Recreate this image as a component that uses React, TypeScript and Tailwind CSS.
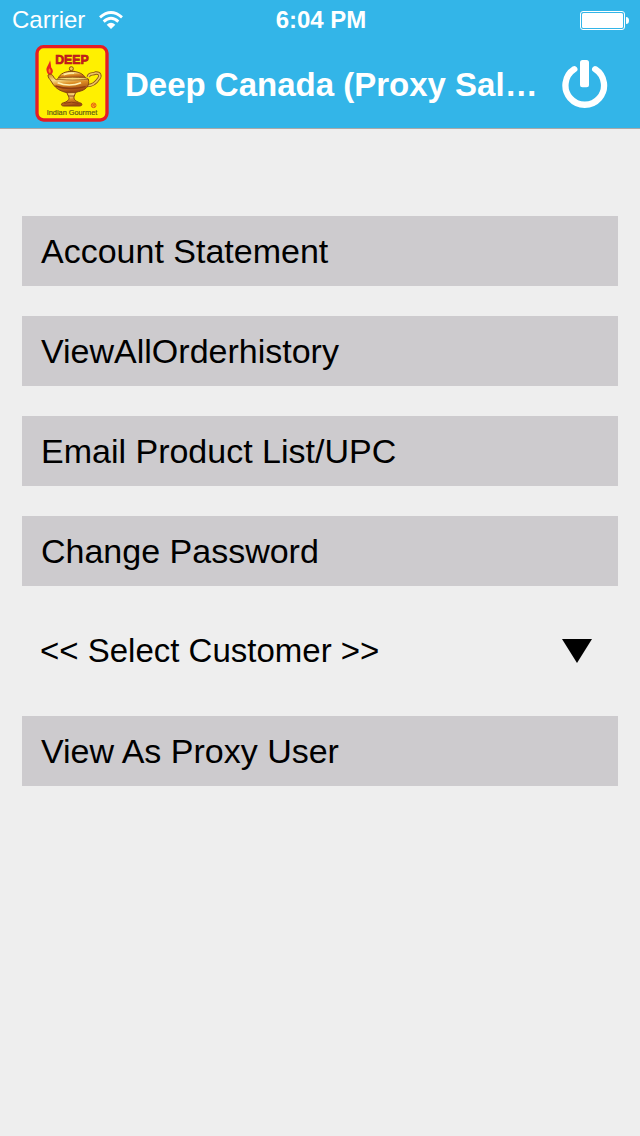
import { useState } from "react";

function WifiIcon() {
  return (
    <svg viewBox="0 0 72 54" className="h-[18px] w-6" aria-hidden="true">
      <g fill="none" stroke="#fff" strokeWidth="8.500">
        <path d="M3 19 Q36 -10 69 19" />
        <path d="M14 32 Q36 12 58 32" />
      </g>
      <path d="M23 41 Q36 30 49 41 L36 54 Z" fill="#fff" />
    </svg>
  );
}

function BatteryIcon() {
  return (
    <svg viewBox="0 0 50 20" className="h-5 w-[50px]" aria-hidden="true">
      <rect x="0.500" y="1.500" width="44" height="18" rx="2.500" fill="none" stroke="#fff" />
      <rect x="2" y="3" width="41" height="15" rx="1.500" fill="#fff" />
      <path d="M46 7 Q49 7 49 10.500 Q49 14 46 14 Z" fill="#fff" />
    </svg>
  );
}

function PowerIcon() {
  return (
    <svg viewBox="0 0 46 48" className="h-12 w-[46px]" aria-hidden="true">
      <path
        d="M12.300 9.200 A19.300 19.300 0 1 0 33.200 9.200"
        fill="none"
        stroke="#fff"
        strokeWidth="6.300"
        strokeLinecap="round"
      />
      <rect x="18" y="0" width="9" height="27.300" rx="2.500" fill="#fff" />
    </svg>
  );
}

function Logo() {
  return (
    <svg
      viewBox="21 20 222 231"
      className="h-[77px] w-[74px] shrink-0"
      role="img"
      aria-label="Deep Indian Gourmet"
    >
      <defs>
        <linearGradient id="gold" x1="0" x2="0.300" y1="0" y2="1">
          <stop offset="0" stopColor="#d98c1c" />
          <stop offset="0.350" stopColor="#f8dc86" />
          <stop offset="0.600" stopColor="#dc8c22" />
          <stop offset="1" stopColor="#a04a14" />
        </linearGradient>
      </defs>
      <rect x="27" y="25" width="210" height="220" rx="20" fill="#fff000" stroke="#e51c25" strokeWidth="10" />
      <text
        x="132"
        y="78"
        textAnchor="middle"
        fontFamily="'Liberation Sans', Arial, sans-serif"
        fontWeight="700"
        fontSize="37"
        fill="#d0181e"
        stroke="#b0181a"
        strokeWidth="2"
      >
        DEEP
      </text>
      <path d="M66 66 C63 80 53 87 56 98 C57 106 62 110 68 109 C77 104 76 94 70 88 C68 82 69 74 66 66 Z" fill="#e8251f" />
      <path d="M64 90 C60 96 61 102 66 105 C70 100 68 94 64 90 Z" fill="#ff8a1c" />
      <path
        d="M181 116 C182 103 194 109 203 104 C216 103 219 112 212 121 C204 134 190 142 177 142"
        fill="none"
        stroke="#8a5510"
        strokeWidth="10"
      />
      <path
        d="M181 116 C182 103 194 109 203 104 C216 103 219 112 212 121 C204 134 190 142 177 142"
        fill="none"
        stroke="#efc562"
        strokeWidth="5"
      />
      <path
        d="M60 110 C67 105 74 109 77 116 C81 124 87 126 93 122 L181 122 C187 144 171 156 151 160 C139 165 116 165 103 159 C86 153 76 141 69 128 C65 121 60 119 60 110 Z"
        fill="url(#gold)"
        stroke="#85480e"
        strokeWidth="3"
      />
      <path d="M91 120 C95 106 113 99 130 99 C149 99 167 106 173 120 Z" fill="url(#gold)" stroke="#85480e" strokeWidth="3" />
      <path d="M107 110 Q122 103 138 105" fill="none" stroke="#fff0a4" strokeWidth="4" />
      <ellipse cx="134" cy="121" rx="46" ry="4" fill="#f9d979" stroke="#85500e" strokeWidth="2" />
      <circle cx="130" cy="91" r="6" fill="#f6c256" stroke="#85500e" strokeWidth="3" />
      <path d="M120 99 h20" stroke="#85500e" strokeWidth="3" />
      <path d="M82 143 Q123 157 173 145" fill="none" stroke="#8e3d12" strokeWidth="4" />
      <path d="M89 133 C110 142 138 142 159 133" fill="none" stroke="#fff1b4" strokeWidth="5" />
      <path
        d="M116 162 H143 L138 175 C136 185 146 190 160 195 Q165 202 155 203 H107 Q97 202 102 195 C119 190 126 184 122 175 Z"
        fill="url(#gold)"
        stroke="#85400e"
        strokeWidth="3"
      />
      <path d="M120 173 h19 M109 195 q21 -7 43 0" fill="none" stroke="#8e3d12" strokeWidth="3" />
      <circle cx="197" cy="201" r="7" fill="none" stroke="#e6501c" strokeWidth="3" />
      <text
        x="197"
        y="205"
        textAnchor="middle"
        fontFamily="'Liberation Sans', Arial, sans-serif"
        fontWeight="700"
        fontSize="12"
        fill="#e6401c"
      >
        R
      </text>
      <text
        x="132"
        y="231"
        textAnchor="middle"
        fontFamily="'Liberation Sans', Arial, sans-serif"
        fontSize="22"
        fill="#5b5414"
        stroke="#5b5414"
        strokeWidth="0.500"
      >
        Indian Gourmet
      </text>
    </svg>
  );
}

function MenuButton({ label }: { label: string }) {
  return (
    <button type="button" className="h-[70px] w-full bg-[#cdcbce] px-[19px] text-left text-[34px] leading-[40px]">
      {label}
    </button>
  );
}

export default function App() {
  const [customer, setCustomer] = useState("");

  return (
    <div className="min-h-screen bg-[#eeeeee] font-['Liberation_Sans',Arial,sans-serif] text-black">
      <header className="border-b border-[#a9a9a9] bg-[#33b5e8] text-white">
        <div className="grid h-10 grid-cols-[1fr_auto_1fr] items-center pl-3 pr-[10px] text-2xl">
          <div className="flex items-center gap-[14px]">
            <span>Carrier</span>
            <WifiIcon />
          </div>
          <span className="font-bold">6:04 PM</span>
          <div className="flex justify-end">
            <BatteryIcon />
          </div>
        </div>
        <div className="flex h-[88px] items-start pl-[35px] pr-8 pt-[5px]">
          <Logo />
          <h1 className="ml-4 mt-5 min-w-0 flex-1 whitespace-nowrap text-[33px] font-bold leading-[40px]">
            Deep Canada (Proxy Sal…
          </h1>
          <button type="button" aria-label="Log out" className="mt-[15px] shrink-0">
            <PowerIcon />
          </button>
        </div>
      </header>

      <main className="flex flex-col gap-[30px] px-[22px] pt-[87px]">
        <MenuButton label="Account Statement" />
        <MenuButton label="ViewAllOrderhistory" />
        <MenuButton label="Email Product List/UPC" />
        <MenuButton label="Change Password" />
        <div className="grid h-[70px] items-center">
          <select
            aria-label="Customer"
            value={customer}
            onChange={(e) => setCustomer(e.target.value)}
            className="col-start-1 row-start-1 h-full w-full appearance-none bg-transparent px-[18px] text-[33px]"
          >
            <option value="">&lt;&lt; Select Customer &gt;&gt;</option>
          </select>
          <svg
            viewBox="0 0 30 24"
            className="pointer-events-none col-start-1 row-start-1 mr-[26px] h-6 w-[30px] justify-self-end"
            aria-hidden="true"
          >
            <path d="M0 0 H30 L15 24 Z" fill="#000" />
          </svg>
        </div>
        <MenuButton label="View As Proxy User" />
      </main>
    </div>
  );
}
